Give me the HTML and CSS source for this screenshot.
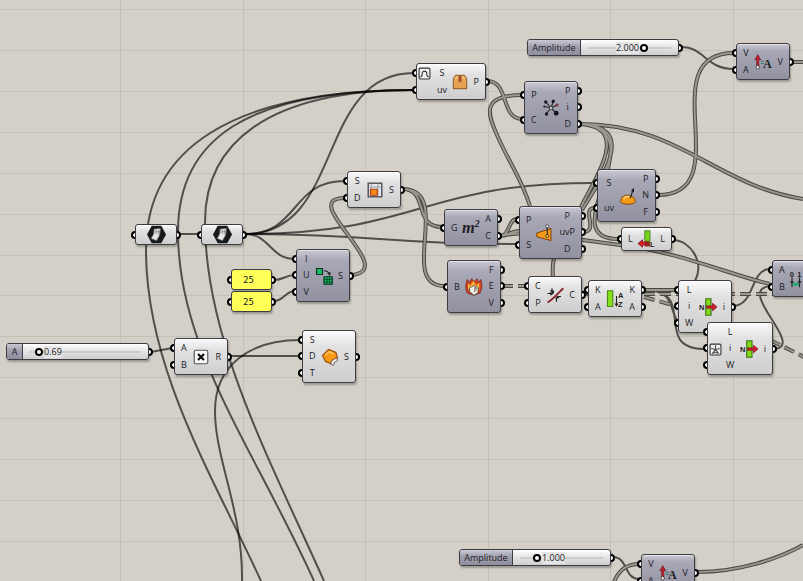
FILE: index.html
```html
<!DOCTYPE html>
<html lang="en">
<head>
<meta charset="utf-8">
<meta name="viewport" content="width=device-width, initial-scale=1">
<title>Node canvas</title>
<link rel="stylesheet" href="styles.css">
</head>
<body>
<svg class="defs" aria-hidden="true">
  <symbol id="i-amp" viewBox="0 0 24 24"><path d="M3.500 18V9H1l4-7 4 7H6.500v9z" fill="#c02030" stroke="#5b1118" stroke-width=".7"/><circle cx="5" cy="19" r="2.200" fill="#fff" stroke="#222"/><path d="M9 11h4M9 14h4" stroke="#2d7772" stroke-width="1.500"/></symbol>
  <symbol id="i-mesh" viewBox="0 0 24 24"><path d="M6 1h12l6 11-6 11H6L0 12z" fill="#17191b"/><path d="M9 5l8-1-1 9-4 7-7-3 3-5z" fill="#e4e6e7" stroke="#555"/><path d="M12 6l-1 5M15 6l-1 6M9 9l8-1" stroke="#888"/></symbol>
  <symbol id="i-item" viewBox="0 0 24 24"><path d="M9 1h7v22H9z" fill="#80db16" stroke="#39701b" stroke-width="1.500"/><path d="M10 10.500h8V7l6 5-6 5v-3.500h-8z" fill="#d3212b" stroke="#811218"/></symbol>
</svg>

<main class="canvas">
  <svg class="wires" aria-hidden="true">
    <path class="grid" d="M0 9h4000M0 50h4000M0 91h4000M0 132h4000M0 173h4000M0 214h4000M0 255h4000M0 295h4000M0 336h4000M0 377h4000M0 418h4000M0 459h4000M0 500h4000M0 541h4000M120 0v4000M243 0v4000M365 0v4000M488 0v4000M610 0v4000M733 0v4000"/>
    <g class="single">
      <path d="M245 234C345 234 315 73 414 73"/>
      <path d="M245 234C300 234 290 181 345 181"/>
      <path d="M245 234C420 234 420 183 595 183"/>
      <path d="M245 234C380 234 380 244 518 244"/>
      <path d="M245 234C270 234 270 259 295 259"/>
      <path d="M178 234H200"/>
      <path d="M414 90C230 90 146 150 146 250C146 370 215 480 261 581"/>
      <path d="M414 90C245 90 178 140 178 232C178 350 255 450 314 581"/>
      <path d="M414 90C265 90 205 145 205 222C205 340 270 460 324 581"/>
      <path d="M151 352L172 348M230 356H300"/>
      <path d="M300 340C250 340 215 365 215 411C215 460 243 510 242 581"/>
      <path d="M274 280C284 280 285 275 295 275M274 301C284 301 285 291 295 291"/>
      <path d="M681 47C705 47 705 69 734 69"/>
      <path d="M613 557C628 557 624 579 639 579"/>
      <path d="M673 240C690 240 705 262 695 281"/>
      <path d="M733 306C755 306 750 269 770 269"/>
      <path d="M775 349C805 345 735 290 770 286"/>
      <path d="M644 290C690 290 655 332 705 332M644 290C700 290 650 349 705 349"/>
      <path d="M583 293L588 289M583 291L588 296"/>
    </g>
    <g class="rim">
      <path id="d1" d="M487 81C510 81 500 119 522 119M522 95C480 95 488 115 497 135C510 165 520 175 530 206"/>
      <path id="d2" d="M580 124C680 124 715 185 803 199M580 124C660 130 550 239 618 239M580 124C640 126 600 180 582 210M580 124C655 128 545 232 583 232"/>
      <path id="d3" d="M583 232C600 232 580 208 595 208M658 195C740 195 650 53 734 53M791 62H803"/>
      <path id="d4" d="M402 189C430 189 412 227 442 227M402 189C455 189 396 286 445 286M352 275C400 270 295 198 345 198"/>
      <path id="d5" d="M500 236C510 236 508 219 517 219M500 236C508 236 510 231 519 231M500 236C540 228 560 238 583 240L620 245C680 252 730 275 770 284"/>
      <path id="d6" d="M554 258Q552 267 553 278M644 290H676M697 572C740 572 780 558 803 545M639 564C625 564 618 572 614 582"/>
    </g>
    <g class="core"><use href="#d1"/><use href="#d2"/><use href="#d3"/><use href="#d4"/><use href="#d5"/><use href="#d6"/></g>
    <g class="rim dashed"><path id="d7" d="M502 286H526M644 294H803M644 297L676 306M770 340L806 358"/></g>
    <g class="core dashed"><use href="#d7"/></g>
  </svg>

  <section class="node short light n-explode"><ul class="in"><li>S</li><li>uv</li></ul><svg class="icon" viewBox="0 0 24 24"><path d="M6 3h12l3 5v13H3V8z" fill="#d58b3e" stroke="#6f4316"/><path d="M4 8h16v12H4z" fill="#e5a253"/><path d="M4 8l3-4h10l3 4z" fill="#f4bd74"/><path d="M10 4h4v9l-2-2-2 2z" fill="#a44c27"/></svg><ul class="out"><li>P</li></ul><svg class="tag top" viewBox="0 0 12 12"><rect x="1" y="1" width="10" height="10" rx="1" fill="#f0f0f0" stroke="#333"/><path d="M2 9q2 0 2-4l1-1h2l1 1q0 4 2 4" fill="none" stroke="#333"/></svg></section>
  <section class="node tall n-closest"><ul class="in"><li>P</li><li>C</li></ul><svg class="icon" viewBox="0 0 24 24"><path d="M12 12L5 4M12 12l3-9M12 12l8-4M12 12l7 7M12 12l-6 7M12 12l-9-2" stroke="#222" stroke-width="1.500"/><g fill="#16161c"><circle cx="5" cy="4" r="2.200"/><circle cx="15" cy="3" r="2.200"/><circle cx="19" cy="19" r="3.200"/><circle cx="6" cy="20" r="2.200"/><circle cx="3" cy="10" r="1.300"/></g><circle cx="20" cy="8" r="2" fill="#84343c"/><circle cx="12" cy="12" r="2" fill="#fff" stroke="#222"/></svg><ul class="out"><li>P</li><li>i</li><li>D</li></ul></section>
  <section class="node short n-amp1"><ul class="in"><li>V</li><li>A</li></ul><svg class="icon" viewBox="0 0 24 24"><use href="#i-amp"/><text x="12" y="20" class="glyph-serif">A</text></svg><ul class="out"><li>V</li></ul></section>
  <section class="node param light n-srf1"><ul class="in"><li></li></ul><svg class="icon"><use href="#i-mesh"/></svg><ul class="out"><li></li></ul></section>
  <section class="node param light n-srf2"><ul class="in"><li></li></ul><svg class="icon"><use href="#i-mesh"/></svg><ul class="out"><li></li></ul></section>
  <section class="node panel n-u"><ul class="in"><li></li></ul><span>25</span><ul class="out"><li></li></ul></section>
  <section class="node panel n-v"><ul class="in"><li></li></ul><span>25</span><ul class="out"><li></li></ul></section>
  <section class="node tall n-divide"><ul class="in"><li>I</li><li>U</li><li>V</li></ul><svg class="icon" viewBox="0 0 24 24"><path d="M2 2h8v8H2zM12 13h11v10H12z" fill="#17b967" stroke="#07351f" stroke-width="1.500"/><path d="M16 13v10M19.500 13v10M12 16.500h11M12 20h11" stroke="#07351f"/><path d="M12 5q6 0 7 5" fill="none" stroke="#222" stroke-width="1.500"/><path d="M16 8l4 4 1-5z" fill="#222"/></svg><ul class="out"><li>S</li></ul></section>
  <section class="node short light n-sub"><ul class="in"><li>S</li><li>D</li></ul><svg class="icon" viewBox="0 0 24 24"><path d="M3 3h18v18H3z" fill="#e7e7ec" stroke="#55555f" stroke-width="2"/><path d="M3 8h18M16 3v18M7 3v18" stroke="#8c8c97"/><path d="M6 11h9v8H6z" fill="#f28e19" stroke="#ad3e0c" stroke-width="1.500"/></svg><ul class="out"><li>S</li></ul></section>
  <section class="node short n-area"><ul class="in"><li>G</li></ul><svg class="icon" viewBox="0 0 24 24"><text x="0" y="18" class="glyph-area">m</text><text x="17" y="11" class="glyph-sup">2</text></svg><ul class="out"><li>A</li><li>C</li></ul></section>
  <section class="node tall n-pull"><ul class="in"><li>P</li><li>S</li></ul><svg class="icon" viewBox="0 0 24 24"><path d="M1 12l19-6v16L1 17z" fill="#f39a1b" stroke="#7e3d0a" stroke-width="1.300"/><path d="M15 3v14" stroke="#222" stroke-width="1.500"/><circle cx="15" cy="3" r="2" fill="#fff" stroke="#222"/><circle cx="15" cy="16" r="2" fill="#ffce38" stroke="#222"/></svg><ul class="out"><li>P</li><li>uvP</li><li>D</li></ul></section>
  <section class="node tall n-brep"><ul class="in"><li>B</li></ul><svg class="icon" viewBox="0 0 24 24"><path d="M3 20C0 13 1 8 3 2l3 4 3-5 3 4 4-4 2 5 3-4c2 6 2 12-1 18l-8 3z" fill="#d64420" stroke="#701f19"/><path d="M4 15V7l3 3 4-6 4 6 4-4v9z" fill="#ffb43a"/><path d="M6 13l6-3 6 3-1 7-5 3-6-5z" fill="#f1eee8" stroke="#423e38"/><path d="M12 11v9l6-7z" fill="#9d9991"/></svg><ul class="out"><li>F</li><li>E</li><li>V</li></ul></section>
  <section class="node short light n-curve"><ul class="in"><li>C</li><li>P</li></ul><svg class="icon" viewBox="0 0 24 24"><path d="M2 22C8 19 15 11 23 3" fill="none" stroke="#8b2030" stroke-width="2.500"/><path d="M8 3v5M2 10h5M14 21v-5M20 14h-5" stroke="#222" stroke-width="1.500"/><path d="M5 6l6 0-1 5zM5 8l5 2-4 3zM12 17l3-4 3 3z" fill="#222"/></svg><ul class="out"><li>C</li></ul></section>
  <section class="node tall n-eval"><ul class="in"><li>S</li><li>uv</li></ul><svg class="icon" viewBox="0 0 24 24"><path d="M2 20c0-6 5-10 11-9 6 1 9 5 9 9-4 4-16 4-20 0z" fill="#f59b18" stroke="#874109" stroke-width="1.300"/><path d="M6 16c2-3 5-4 8-3" fill="none" stroke="#ffd479" stroke-width="2"/><path d="M15 15l4-12" stroke="#222" stroke-width="1.500"/><path d="M16 5l4-4 0 6z" fill="#222"/></svg><ul class="out"><li>P</li><li>N</li><li>F</li></ul></section>
  <section class="node length light n-length"><ul class="in"><li>L</li></ul><svg class="icon" viewBox="0 0 24 24"><path d="M9 1h7v14H9z" fill="#75d51a" stroke="#38701a"/><path d="M9 15h7v7H9z" fill="#8b3426"/><path d="M0 18l6-5v3h6v4H6v3z" fill="#d21e23" stroke="#811218"/><text x="16" y="22" class="glyph">L</text></svg><ul class="out"><li>L</li></ul></section>
  <section class="node short light n-sort"><ul class="in"><li>K</li><li>A</li></ul><svg class="icon" viewBox="0 0 24 24"><path d="M2 1h7v21H2z" fill="#86df1b" stroke="#4b8b17" stroke-width="1.500"/><text x="16" y="10" class="glyph">A</text><text x="16" y="23" class="glyph">Z</text><path d="M14 8v13M12 18l2 3 2-3" fill="none" stroke="#222" stroke-width="1.500"/></svg><ul class="out"><li>K</li><li>A</li></ul></section>
  <section class="node tall light n-item1"><ul class="in"><li>L</li><li>i</li><li>W</li></ul><svg class="icon" viewBox="0 0 24 24"><use href="#i-item"/><text x="0" y="16" class="glyph">N</text></svg><ul class="out"><li>i</li></ul></section>
  <section class="node tall light n-item2"><ul class="in"><li>L</li><li>i</li><li>W</li></ul><svg class="icon" viewBox="0 0 24 24"><use href="#i-item"/><text x="0" y="16" class="glyph">N</text></svg><ul class="out"><li>i</li></ul><svg class="tag middle" viewBox="0 0 12 12"><rect x="1" y="1" width="10" height="10" rx="1" fill="#f0f0f0" stroke="#333"/><path d="M6 2v4M2 5l4 1 4-1M3 10l3-4 3 4M4 9h4" fill="none" stroke="#444"/></svg></section>
  <section class="node short n-bounds"><ul class="in"><li>A</li><li>B</li></ul><svg class="icon" viewBox="0 0 24 24"><path d="M4 10v13M14 10v13M2 15l2 3 2-3M12 15l2 3 2-3" stroke="#222" stroke-width="1.500" fill="none"/><path d="M5 17h8v4H5z" fill="#20ad72"/><text x="1" y="9" class="glyph">0</text><text x="11" y="9" class="glyph">1</text></svg></section>
  <section class="node short light n-times"><ul class="in"><li>A</li><li>B</li></ul><svg class="icon" viewBox="0 0 24 24"><rect x="3" y="3" width="18" height="18" rx="2" fill="#f8f8f8" stroke="#555" stroke-width="1.500"/><path d="M8 8l8 8M16 8l-8 8" stroke="#111" stroke-width="3"/></svg><ul class="out"><li>R</li></ul></section>
  <section class="node tall light n-offset"><ul class="in"><li>S</li><li>D</li><li>T</li></ul><svg class="icon" viewBox="0 0 24 24"><path d="M2 10l8-8 10 4 2 8-8 7-8-3z" fill="#f69a16" stroke="#9b4d0b" stroke-width="1.500"/><path d="M5 10l6-5 6 3" fill="none" stroke="#ffc35c" stroke-width="2"/><path d="M13 22l1-5 7-4 1 4-4 2-1 4z" fill="#eee" stroke="#5e3940"/></svg><ul class="out"><li>S</li></ul></section>
  <section class="node short n-amp2"><ul class="in"><li>V</li><li>A</li></ul><svg class="icon" viewBox="0 0 24 24"><use href="#i-amp"/><text x="12" y="20" class="glyph-serif">A</text></svg><ul class="out"><li>V</li></ul></section>

  <div class="slider s-amp1"><label for="amp1">Amplitude</label><div class="track"><input id="amp1" type="range" min="0" max="3" step="any" value="2"><output class="before" for="amp1">2.000</output></div></div>
  <div class="slider s-a"><label for="a">A</label><div class="track"><input id="a" type="range" min="0" max="6.5" step="any" value="0.69"><output class="after-a" for="a">0.69</output></div></div>
  <div class="slider s-amp2"><label for="amp2">Amplitude</label><div class="track"><input id="amp2" type="range" min="0" max="4.5" step="any" value="1"><output class="after" for="amp2">1.000</output></div></div>
</main>
</body>
</html>
```
FILE: styles.css
```css
*, *::before, *::after { box-sizing: border-box; }
body {
  margin: 0;
  background: #d4d0c8;
  color: #202026;
  font: 9px/16px "Open Sans", "Noto Sans", sans-serif;
}
.defs { position: absolute; width: 0; height: 0; }
.canvas { position: relative; min-height: 100vh; overflow: hidden; }

/* wires */
.wires { position: absolute; inset: 0; width: 100%; height: 100%; fill: none; }
.grid { stroke: #c5c1b8; stroke-width: 1; shape-rendering: crispEdges; }
.single { stroke: #000; stroke-opacity: .62; stroke-width: 2; }
.rim { stroke: #4b4944; stroke-width: 4; }
.core { stroke: #9b978e; stroke-width: 2; }
.dashed { stroke-dasharray: 11 5; }

/* components */
.node {
  position: absolute;
  display: flex;
  align-items: center;
  justify-content: space-between;
  width: 54px;
  padding: 1px 6px;
  border: 1px solid #3c3c42;
  border-radius: 3px;
  background: linear-gradient(#c9c8d2, #a9a8b6 20%, #92919f);
  box-shadow: inset 0 1px #e4e3ea, 1px 2px 2px #0004;
}
.light { background: linear-gradient(#fafafa, #e2e2e2 30%, #cecece); box-shadow: inset 0 1px #fff, 1px 2px 2px #0004; }
.short { height: 37px; }
.tall { height: 53px; }
.param { width: 42px; height: 21px; }
.length { width: 51px; height: 24px; }
.panel { width: 41px; height: 21px; background: #ffff58; box-shadow: 1px 2px 2px #0004; font: 9px/16px "DejaVu Sans Mono", monospace; }
.panel span { padding-right: 6px; }
.node ul { display: flex; flex-direction: column; position: relative; align-self: stretch; margin: 0; padding: 0; list-style: none; text-align: center; }
.node li { display: flex; flex: 1; align-items: center; justify-content: center; }
.in li::before, .out li::after {
  content: "";
  position: absolute;
  width: 4px;
  height: 8px;
  border: 2px solid #000;
  background: #fff;
}
.in li::before { left: -11px; border-right: 0; border-radius: 4px 0 0 4px; }
.out li::after { right: -11px; border-left: 0; border-radius: 0 4px 4px 0; }
.icon { flex: none; width: 18px; height: 18px; }
.param .icon { width: 19px; height: 19px; }
.tag { position: absolute; left: 1px; width: 13px; height: 13px; }
.top { top: 3px; }
.middle { top: 20px; }
.glyph { font: bold 10px "Liberation Sans", sans-serif; fill: #222; }
.glyph-serif { font: bold 16px "Liberation Serif", serif; fill: #222; }
.glyph-area { font: italic bold 22px "Liberation Serif", serif; fill: #222; }
.glyph-sup { font: italic bold 13px "Liberation Serif", serif; fill: #222; }

/* places on the canvas */
.n-explode { left: 416px; top: 63px; width: 70px; }
.n-explode .in { margin-left: 14px; }
.n-explode .in li::before { left: -25px; }
.n-closest { left: 524px; top: 81px; }
.n-amp1 { left: 736px; top: 43px; }
.n-srf1 { left: 135px; top: 224px; }
.n-srf2 { left: 201px; top: 224px; }
.n-u { left: 231px; top: 269px; }
.n-v { left: 231px; top: 291px; }
.n-divide { left: 296px; top: 249px; }
.n-sub { left: 347px; top: 171px; }
.n-area { left: 444px; top: 209px; }
.n-pull { left: 519px; top: 206px; width: 63px; }
.n-brep { left: 447px; top: 260px; }
.n-curve { left: 528px; top: 276px; }
.n-eval { left: 597px; top: 169px; width: 59px; }
.n-length { left: 621px; top: 227px; }
.n-sort { left: 588px; top: 280px; }
.n-item1 { left: 678px; top: 280px; }
.n-item2 { left: 707px; top: 322px; width: 66px; }
.n-item2 .in { margin-left: 12px; }
.n-item2 .in li::before { left: -23px; }
.n-bounds { left: 772px; top: 260px; justify-content: flex-start; gap: 4px; }
.n-times { left: 174px; top: 338px; }
.n-offset { left: 302px; top: 330px; }
.n-amp2 { left: 641px; top: 554px; }

/* sliders */
.slider {
  position: absolute;
  display: flex;
  width: 152px;
  height: 17px;
  border: 1px solid #3c3c42;
  border-radius: 3px;
  background: linear-gradient(#fff, #e8e8e8 40%, #cfcfcf);
  box-shadow: 1px 2px 2px #0004;
}
.slider::after {
  content: "";
  position: absolute;
  right: -5px;
  top: 4px;
  width: 4px;
  height: 8px;
  border: 2px solid #000;
  border-left: 0;
  border-radius: 0 4px 4px 0;
  background: #fff;
}
.slider label {
  width: 53px;
  border-right: 1px solid #3c3c42;
  border-radius: 2px 0 0 2px;
  background: linear-gradient(#c9c8d2, #a3a2b1 40%, #8f8e9d);
  line-height: 15px;
  text-align: center;
}
.track { display: grid; flex: 1; align-items: center; background: linear-gradient(#ccc, #ccc) center / calc(100% - 14px) 2px no-repeat; }
.track > * { grid-area: 1 / 1; }
.track input { width: 100%; height: 15px; margin: 0; appearance: none; background: none; }
.track input::-webkit-slider-thumb { width: 8px; height: 8px; appearance: none; border: 2px solid #000; border-radius: 50%; background: #fff; }
.track output { justify-self: start; line-height: 12px; background: #e4e4e4; pointer-events: none; }
.before { margin-left: 35px; }
.after { margin-left: 29px; }
.after-a { margin-left: 21px; }
.s-amp1 { left: 527px; top: 39px; }
.s-a { left: 6px; top: 343px; width: 143px; }
.s-a label { width: 16px; }
.s-amp2 { left: 459px; top: 549px; }
```
